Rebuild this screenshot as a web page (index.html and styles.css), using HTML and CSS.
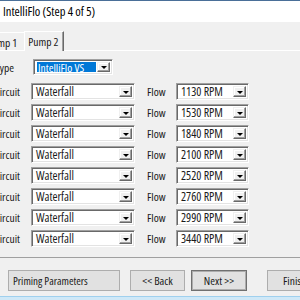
FILE: index.html
```html
<!DOCTYPE html>
<html>
<head>
<meta charset="utf-8">
<link rel="stylesheet" href="styles.css">
</head>
<body>
<div class="window">
  <div class="titlebar"><span class="title">IntelliFlo (Step 4 of 5)</span></div>
  <div class="tabs">
    <div class="tab tab-inactive">Pump 1</div>
    <div class="tab tab-active">Pump 2</div>
  </div>
  <div class="panel">
    <div class="row type-row">
      <div class="label label-type">Pump Type</div>
      <div class="combo combo-type"><span class="sel">IntelliFlo VS</span><span class="arrow"></span></div>
    </div>
    <div class="rows">
      <div class="row"><div class="label label-circuit">Circuit</div><div class="combo combo-circuit"><span class="val">Waterfall</span><span class="arrow"></span></div><div class="label-flow">Flow</div><div class="combo combo-rpm"><span class="val">1130 RPM</span><span class="arrow"></span></div></div>
      <div class="row"><div class="label label-circuit">Circuit</div><div class="combo combo-circuit"><span class="val">Waterfall</span><span class="arrow"></span></div><div class="label-flow">Flow</div><div class="combo combo-rpm"><span class="val">1530 RPM</span><span class="arrow"></span></div></div>
      <div class="row"><div class="label label-circuit">Circuit</div><div class="combo combo-circuit"><span class="val">Waterfall</span><span class="arrow"></span></div><div class="label-flow">Flow</div><div class="combo combo-rpm"><span class="val">1840 RPM</span><span class="arrow"></span></div></div>
      <div class="row"><div class="label label-circuit">Circuit</div><div class="combo combo-circuit"><span class="val">Waterfall</span><span class="arrow"></span></div><div class="label-flow">Flow</div><div class="combo combo-rpm"><span class="val">2100 RPM</span><span class="arrow"></span></div></div>
      <div class="row"><div class="label label-circuit">Circuit</div><div class="combo combo-circuit"><span class="val">Waterfall</span><span class="arrow"></span></div><div class="label-flow">Flow</div><div class="combo combo-rpm"><span class="val">2520 RPM</span><span class="arrow"></span></div></div>
      <div class="row"><div class="label label-circuit">Circuit</div><div class="combo combo-circuit"><span class="val">Waterfall</span><span class="arrow"></span></div><div class="label-flow">Flow</div><div class="combo combo-rpm"><span class="val">2760 RPM</span><span class="arrow"></span></div></div>
      <div class="row"><div class="label label-circuit">Circuit</div><div class="combo combo-circuit"><span class="val">Waterfall</span><span class="arrow"></span></div><div class="label-flow">Flow</div><div class="combo combo-rpm"><span class="val">2990 RPM</span><span class="arrow"></span></div></div>
      <div class="row"><div class="label label-circuit">Circuit</div><div class="combo combo-circuit"><span class="val">Waterfall</span><span class="arrow"></span></div><div class="label-flow">Flow</div><div class="combo combo-rpm"><span class="val">3440 RPM</span><span class="arrow"></span></div></div>
    </div>
  </div>
  <div class="buttons">
    <div class="btn btn-priming">Priming Parameters</div>
    <div class="btn btn-back">&lt;&lt; Back</div>
    <div class="btn btn-next">Next &gt;&gt;</div>
    <div class="btn btn-finish">Finish</div>
  </div>
  <div class="bottombar"></div>
</div>
</body>
</html>
```
FILE: styles.css
```css
html, body {
  margin: 0;
  padding: 0;
  width: 300px;
  height: 300px;
  overflow: hidden;
  background: #f0f0f0;
}
.window {
  width: 300px;
  height: 300px;
  display: flex;
  flex-direction: column;
  font-family: "Open Sans", "DejaVu Sans", sans-serif;
  font-stretch: 82%;
  font-size: 11.5px;
  color: #1a1a1a;
}
.titlebar {
  height: 21px;
  border-top: 1px solid #4a6f98;
  background: #fff;
  display: flex;
  align-items: center;
  padding-left: 3px;
  font-size: 12.5px;
  font-stretch: 80%;
  color: #000;
  flex: none;
}
.tabs {
  height: 28px;
  display: flex;
  align-items: flex-end;
  margin-left: -18px;
  flex: none;
}
.tab {
  box-sizing: border-box;
  display: flex;
  align-items: center;
}
.tab-inactive {
  height: 18px;
  padding: 2px 7px 0 4px;
  border-top: 1px solid #fff;
  border-left: 1px solid #fff;
}
.tab-active {
  height: 20px;
  padding: 0 4px 0 3px;
  border-top: 1px solid #fff;
  border-left: 1px solid #fff;
  border-right: 1px solid #696969;
  box-shadow: inset -1px 0 0 #a0a0a0;
  position: relative;
  top: 1px;
  background: #f0f0f0;
}
.panel {
  border-top: 1px solid #fff;
  height: 208px;
  border-bottom: 1px solid #a0a0a0;
  box-sizing: border-box;
  padding-top: 8px;
  margin-left: -60px;
  flex: none;
}
.row {
  display: flex;
  align-items: center;
}
.type-row {
  height: 16px;
  margin-bottom: 8px;
}
.rows {
  display: flex;
  flex-direction: column;
  gap: 4px;
}
.rows .row {
  height: 17px;
}
.label {
  text-align: right;
  white-space: nowrap;
  flex: none;
}
.label-type {
  width: 74px;
  margin-right: 19px;
}
.label-circuit {
  width: 80px;
  margin-right: 11px;
}
.label-flow {
  width: 29px;
  margin-left: 12px;
  flex: none;
}
.combo {
  box-sizing: border-box;
  height: 100%;
  background: #fff;
  border-top: 1px solid #a0a0a0;
  border-left: 1px solid #a0a0a0;
  border-right: 1px solid #fff;
  border-bottom: 1px solid #fff;
  box-shadow: inset 1px 1px 0 #696969, inset -1px -1px 0 #e3e3e3;
  display: flex;
  align-items: center;
  padding: 2px 2px 2px 3px;
  flex: none;
}
.combo .val {
  flex: 1;
  min-width: 0;
  padding-left: 1px;
  font-size: 12px;
  white-space: nowrap;
  overflow: hidden;
}
.combo-rpm .val {
  font-stretch: 87%;
}
.combo-type {
  width: 80px;
}
.combo-circuit {
  width: 104px;
}
.combo-rpm {
  width: 73px;
}
.sel {
  flex: 1;
  min-width: 0;
  white-space: nowrap;
  background: #0078d7;
  color: #fff;
  height: 100%;
  display: flex;
  align-items: center;
  padding-left: 1px;
  margin-right: 1px;
  font-size: 11.5px;
  font-stretch: 82%;
}
.arrow {
  box-sizing: border-box;
  width: 13px;
  height: 100%;
  background: #f0f0f0;
  border-top: 1px solid #f0f0f0;
  border-left: 1px solid #f0f0f0;
  border-right: 1px solid #696969;
  border-bottom: 1px solid #696969;
  box-shadow: inset -1px -1px 0 #a0a0a0, inset 1px 1px 0 #fff;
  display: flex;
  align-items: center;
  justify-content: center;
  flex: none;
}
.arrow::before {
  content: "";
  border-left: 3px solid transparent;
  border-right: 3px solid transparent;
  border-top: 3px solid #000;
  margin-top: 1px;
}
.buttons {
  display: flex;
  height: 21px;
  margin-top: 12px;
  padding-left: 8px;
  flex: none;
}
.btn {
  box-sizing: border-box;
  height: 21px;
  border: 1px solid #adadad;
  background: #e1e1e1;
  display: flex;
  align-items: center;
  justify-content: center;
  flex: none;
  white-space: nowrap;
}
.btn-priming {
  width: 112px;
  justify-content: flex-start;
  padding-left: 4px;
  font-size: 11px;
  font-stretch: 80%;
}
.btn-back {
  width: 55px;
  margin-left: 10px;
}
.btn-next {
  width: 56px;
  margin-left: 6px;
  border-color: #707070;
  box-shadow: inset 0 0 0 1px #adadad;
}
.btn-finish {
  width: 56px;
  margin-left: 20px;
  justify-content: flex-start;
  padding-left: 15px;
}
.bottombar {
  margin-top: 5px;
  height: 3px;
  background: #cfe8f7;
  border-top: 1px solid #9fd0ee;
  flex: none;
}
```
